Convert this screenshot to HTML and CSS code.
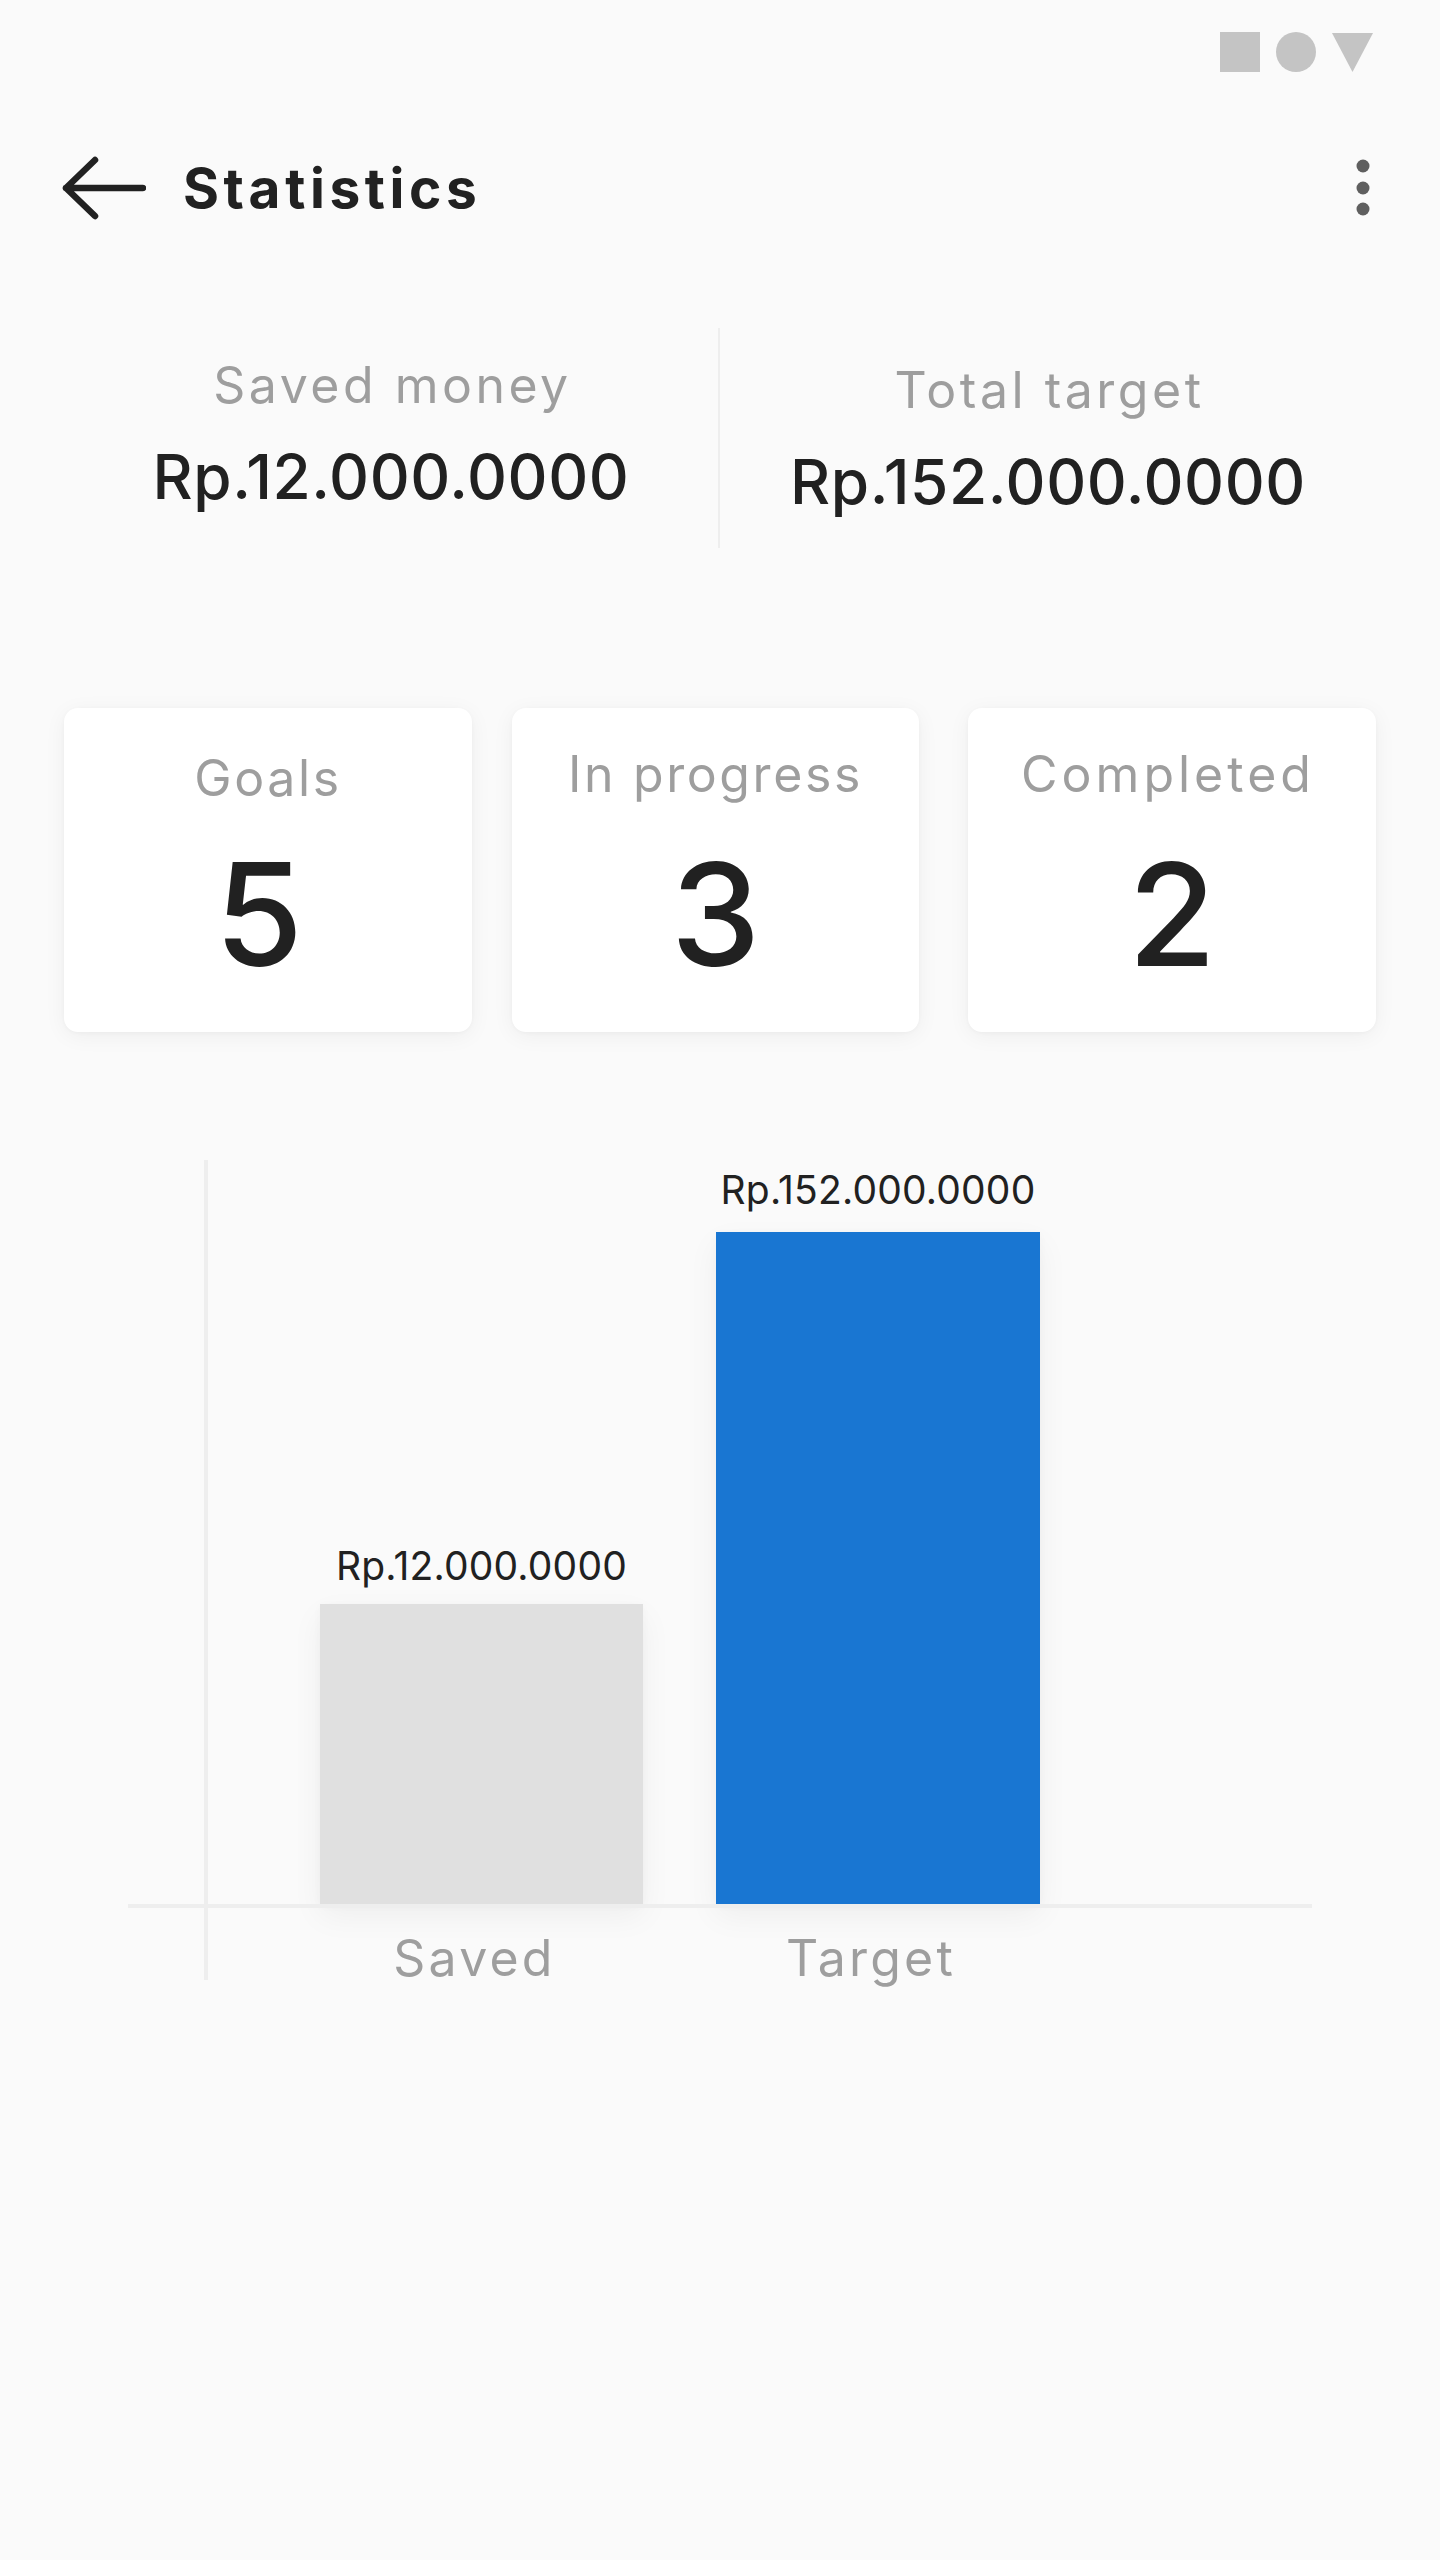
FILE: index.html
```html
<!DOCTYPE html>
<html lang="en">
<head>
<meta charset="utf-8">
<title>Statistics</title>
<link rel="stylesheet" href="styles.css">
</head>
<body>
<div class="screen">
  <div class="status-bar">
    <span class="status-square"></span>
    <span class="status-circle"></span>
    <svg class="status-triangle" width="41" height="40" viewBox="0 0 41 40"><polygon points="0,1 41,1 20.5,40" fill="#c4c4c4"/></svg>
  </div>

  <header class="app-bar">
    <svg class="back-icon" width="84" height="66" viewBox="0 0 84 66" aria-label="Back">
      <path d="M81 33 H4 M33 5 L4 33 L33 61" fill="none" stroke="#212121" stroke-width="6.5" stroke-linecap="round" stroke-linejoin="round"/>
    </svg>
    <h1 class="app-title">Statistics</h1>
    <svg class="more-icon" width="14" height="58" viewBox="0 0 14 58" aria-label="More">
      <circle cx="7" cy="7" r="6.5" fill="#5f5f5f"/>
      <circle cx="7" cy="29" r="6.5" fill="#5f5f5f"/>
      <circle cx="7" cy="50" r="6.5" fill="#5f5f5f"/>
    </svg>
  </header>

  <section class="summary">
    <div class="summary-col summary-col--left">
      <div class="summary-label">Saved money</div>
      <div class="summary-value">Rp.12.000.0000</div>
    </div>
    <div class="summary-col summary-col--right">
      <div class="summary-label">Total target</div>
      <div class="summary-value">Rp.152.000.0000</div>
    </div>
  </section>

  <section class="cards">
    <div class="card">
      <div class="card-label">Goals</div>
      <div class="card-number card-number--shift">5</div>
    </div>
    <div class="card card--second">
      <div class="card-label card-label--up">In progress</div>
      <div class="card-number">3</div>
    </div>
    <div class="card card--third">
      <div class="card-label card-label--up card-label--wide">Completed</div>
      <div class="card-number">2</div>
    </div>
  </section>

  <section class="chart">
    <div class="plot">
      <div class="bar-col bar-col--saved">
        <div class="bar-value bar-value--saved">Rp.12.000.0000</div>
        <div class="bar bar--saved" style="height:300px"></div>
      </div>
      <div class="bar-col bar-col--target">
        <div class="bar-value bar-value--target">Rp.152.000.0000</div>
        <div class="bar bar--target" style="height:672px"></div>
      </div>
    </div>
    <div class="x-labels">
      <div class="x-label x-label--saved">Saved</div>
      <div class="x-label x-label--target">Target</div>
    </div>
    <div class="axis-x"></div>
    <div class="axis-y"></div>
  </section>
</div>
</body>
</html>
```

FILE: styles.css
```css
html, body {
  margin: 0;
  padding: 0;
  background: #fafafa;
}

.screen {
  width: 1440px;
  min-height: 2560px;
  background: #fafafa;
  font-family: "Inter", "Noto Sans", sans-serif;
  color: #212121;
}

/* status bar */
.status-bar {
  display: flex;
  justify-content: flex-end;
  align-items: flex-start;
  gap: 16px;
  padding: 32px 67px 0 0;
  height: 40px;
}
.status-square {
  width: 40px;
  height: 40px;
  background: #c4c4c4;
}
.status-circle {
  width: 40px;
  height: 40px;
  border-radius: 50%;
  background: #c4c4c4;
}
.status-triangle {
  display: block;
}

/* app bar */
.app-bar {
  display: flex;
  align-items: center;
  height: 100px;
  margin-top: 66px;
  padding: 0 70px 0 62px;
}
.back-icon {
  display: block;
  flex: none;
}
.app-title {
  margin: 0 0 0 37px;
  flex: 1;
  font-size: 55px;
  line-height: 1;
  font-weight: 700;
  letter-spacing: 4.6px;
  color: #212121;
}
.more-icon {
  display: block;
  flex: none;
}

/* summary */
.summary {
  display: flex;
  margin: 90px 64px 0 64px;
  height: 220px;
}
.summary-col {
  display: flex;
  flex-direction: column;
  align-items: center;
}
.summary-col--left {
  width: 654px;
  border-right: 2px solid #eeeeee;
  padding-top: 32px;
}
.summary-col--right {
  flex: 1;
  padding-top: 37px;
}
.summary-label {
  font-size: 50px;
  line-height: 50px;
  color: #9e9e9e;
  letter-spacing: 3.5px;
  padding-left: 3px;
}
.summary-value {
  margin-top: 36px;
  font-size: 62px;
  line-height: 62px;
  font-weight: 500;
  letter-spacing: 0.6px;
  color: #212121;
}

/* cards */
.cards {
  display: flex;
  margin: 160px 64px 0 64px;
}
.card {
  width: 408px;
  height: 324px;
  background: #ffffff;
  border-radius: 14px;
  box-shadow: 0 4px 22px rgba(0, 0, 0, 0.05), 0 1px 4px rgba(0, 0, 0, 0.03);
  display: flex;
  flex-direction: column;
  align-items: center;
}
.card--second {
  width: 407px;
  margin-left: 40px;
}
.card--third {
  margin-left: 49px;
}
.card-label {
  margin-top: 45px;
  height: 50px;
  font-size: 50px;
  line-height: 50px;
  color: #9e9e9e;
  letter-spacing: 2.6px;
}
.card-label--up {
  margin-top: 41px;
  margin-bottom: 4px;
}
.card-label--wide {
  letter-spacing: 4px;
  padding-right: 8px;
}
.card-number {
  margin-top: 39px;
  font-size: 143px;
  line-height: 143px;
  font-weight: 500;
  color: #212121;
}
.card-number--shift {
  padding-right: 18px;
}

/* chart */
.chart {
  display: grid;
  grid-template-columns: 76px 4px 1104px;
  grid-template-rows: 744px 4px 72px;
  margin: 128px 0 0 128px;
}
.plot {
  grid-column: 3;
  grid-row: 1;
  display: flex;
  align-items: flex-end;
  padding-left: 112px;
}
.bar-col {
  display: flex;
  flex-direction: column;
  align-items: center;
}
.bar-col--saved {
  width: 323px;
}
.bar-col--target {
  width: 324px;
  margin-left: 73px;
}
.bar-value {
  font-size: 39px;
  line-height: 39px;
  letter-spacing: 0.2px;
  color: #212121;
}
.bar-value--saved {
  margin-bottom: 19px;
}
.bar-value--target {
  margin-bottom: 23px;
}
.bar {
  width: 100%;
  box-shadow: 0 12px 30px rgba(0, 0, 0, 0.05), 0 2px 8px rgba(0, 0, 0, 0.03);
}
.bar--saved {
  background: #e0e0e0;
}
.bar--target {
  background: #1976d2;
}
.x-labels {
  grid-column: 3;
  grid-row: 3;
  display: flex;
  padding-left: 112px;
}
.x-label {
  box-sizing: border-box;
  padding-right: 14px;
  margin-top: 25px;
  text-align: center;
  font-size: 50px;
  line-height: 50px;
  color: #9e9e9e;
  letter-spacing: 3.2px;
}
.x-label--saved {
  width: 323px;
}
.x-label--target {
  width: 324px;
  margin-left: 73px;
}
.axis-x {
  grid-column: 1 / 4;
  grid-row: 2;
  background: #eeeeee;
}
.axis-y {
  grid-column: 2;
  grid-row: 1 / 4;
  background: #eeeeee;
}
```
